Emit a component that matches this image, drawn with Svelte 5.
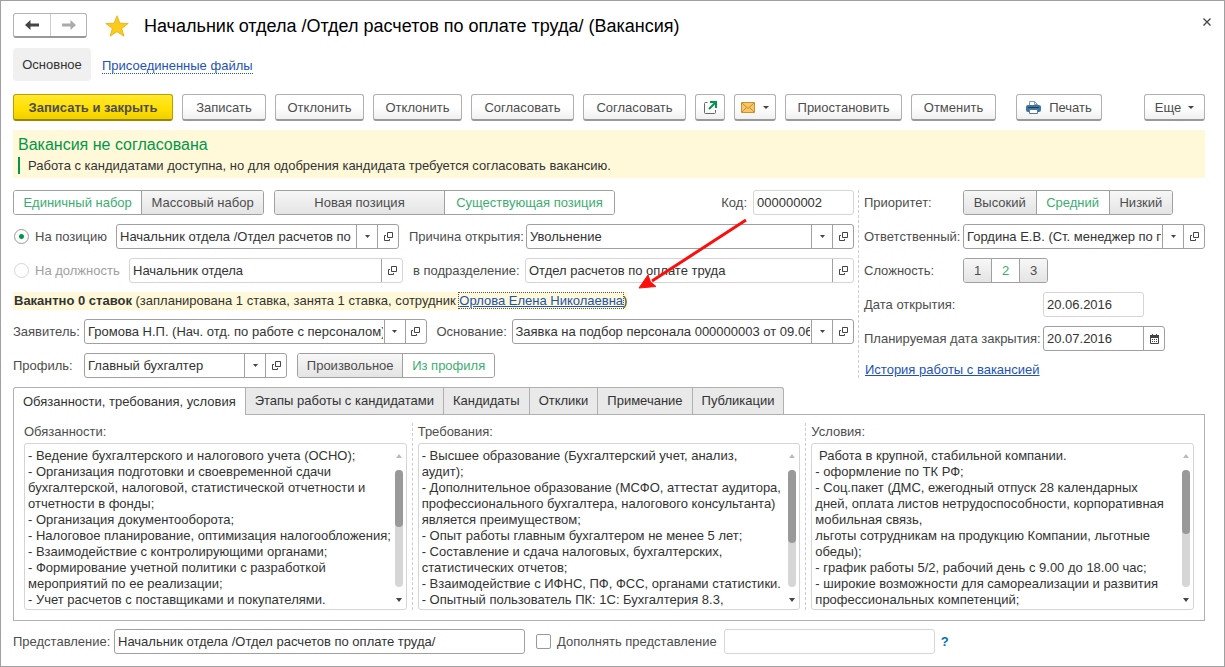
<script>
    let hiring = $state('Единичный набор');
    let position = $state('Существующая позиция');
    let priority = $state('Средний');
    let difficulty = $state('2');
    let source = $state('Из профиля');
    let activeTab = $state('Обязанности, требования, условия');
    let target = $state('position');

    const tabs = [
        'Обязанности, требования, условия',
        'Этапы работы с кандидатами',
        'Кандидаты',
        'Отклики',
        'Примечание',
        'Публикации'
    ];

    const columns = [
        {
            id: 'duties',
            label: 'Обязанности:',
            thumb: 49,
            text: `- Ведение бухгалтерского и налогового учета (ОСНО);
- Организация подготовки и своевременной сдачи
бухгалтерской, налоговой, статистической отчетности и
отчетности в фонды;
- Организация документооборота;
- Налоговое планирование, оптимизация налогообложения;
- Взаимодействие с контролирующими органами;
- Формирование учетной политики с разработкой
мероприятий по ее реализации;
- Учет расчетов с поставщиками и покупателями.`
        },
        {
            id: 'requirements',
            label: 'Требования:',
            thumb: 63,
            text: `- Высшее образование (Бухгалтерский учет, анализ,
аудит);
- Дополнительное образование (МСФО, аттестат аудитора,
профессионального бухгалтера, налогового консультанта)
является преимуществом;
- Опыт работы главным бухгалтером не менее 5 лет;
- Составление и сдача налоговых, бухгалтерских,
статистических отчетов;
- Взаимодействие с ИФНС, ПФ, ФСС, органами статистики.
- Опытный пользователь ПК: 1С: Бухгалтерия 8.3,`
        },
        {
            id: 'conditions',
            label: 'Условия:',
            thumb: 55,
            text: ` Работа в крупной, стабильной компании.
- оформление по ТК РФ;
- Соц.пакет (ДМС, ежегодный отпуск 28 календарных
дней, оплата листов нетрудоспособности, корпоративная
мобильная связь,
льготы сотрудникам на продукцию Компании, льготные
обеды);
- график работы 5/2, рабочий день с 9.00 до 18.00 час;
- широкие возможности для самореализации и развития
профессиональных компетенций;`
        }
    ];
</script>

{#snippet caret()}
    <svg class="caret" width="6" height="3" viewBox="0 0 6 3" aria-hidden="true"><path d="M0 0h6L3 3z" fill="#444" /></svg>
{/snippet}

{#snippet field(id, value, extras = [], locked = false)}
    <div class="field" class:locked>
        <input {id} type="text" {value} readonly={locked} />
        {#if extras.includes('list')}
            <button type="button" aria-label="Выбрать из списка">
                <svg width="5" height="3" viewBox="0 0 5 3"><path d="M0 0h5L2.5 3z" fill="#444" /></svg>
            </button>
        {/if}
        {#if extras.includes('open')}
            <button type="button" aria-label="Открыть">
                <svg width="9" height="9" viewBox="0 0 9 9" fill="none" stroke="#444">
                    <path d="M3.5 .5h5v5h-5z" />
                    <path d="M2 3.5H.5v5h5V7" />
                </svg>
            </button>
        {/if}
        {#if extras.includes('calendar')}
            <button type="button" aria-label="Календарь">
                <svg width="9" height="10" viewBox="0 0 9 10">
                    <path d="M.5 2h8v7.5h-8z" fill="#fff" stroke="#444" />
                    <path d="M0 1h9v3H0zM2 0h1v2H2zM6 0h1v2H6z" fill="#444" />
                    <path d="M2 5h1v1H2zM4 5h1v1H4zM6 5h1v1H6zM2 7h1v1H2zM4 7h1v1H4zM6 7h1v1H6z" fill="#444" />
                </svg>
            </button>
        {/if}
    </div>
{/snippet}

{#snippet segments(items, current, pick, kind)}
    <div class="segments {kind}" role="group">
        {#each items as item}
            <button type="button" class:on={item === current} aria-pressed={item === current} onclick={() => pick(item)}>{item}</button>
        {/each}
    </div>
{/snippet}

<main class="window">
    <header class="title-row">
        <div class="history">
            <button type="button" aria-label="Назад">
                <svg width="14" height="12" viewBox="0 0 14 12"><path d="M0 6l5.500-5v3.500H14v3H5.500V11z" fill="#444" /></svg>
            </button>
            <button type="button" aria-label="Вперед">
                <svg width="14" height="12" viewBox="0 0 14 12"><path d="M14 6L8.500 1v3.500H0v3h8.500V11z" fill="#aaa" /></svg>
            </button>
        </div>
        <svg class="star" width="24" height="22" viewBox="0 0 24 22" aria-hidden="true">
            <path d="M12 .8l2.900 7.400 8.300.3-6.500 5 2.300 7.700-7-4.500-7 4.500 2.300-7.700-6.500-5 8.300-.3z" fill="#fbcb1b" stroke="#e3ad12" stroke-width=".8" />
        </svg>
        <h1>Начальник отдела /Отдел расчетов по оплате труда/ (Вакансия)</h1>
        <button type="button" class="close" aria-label="Закрыть">
            <svg width="8" height="8" viewBox="0 0 8 8"><path d="M.5 .5l7 7M7.500 .5l-7 7" stroke="#444" stroke-width="1.300" /></svg>
        </button>
    </header>

    <nav>
        <span class="current">Основное</span>
        <a href="#files">Присоединенные файлы</a>
    </nav>

    <div class="toolbar">
        <button type="button" class="primary">Записать и закрыть</button>
        <button type="button" class="w-84">Записать</button>
        <button type="button" class="w-89">Отклонить</button>
        <button type="button" class="w-89">Отклонить</button>
        <button type="button" class="w-103">Согласовать</button>
        <button type="button" class="w-103">Согласовать</button>
        <button type="button" class="w-30" aria-label="Открыть в новом окне">
            <svg width="15" height="15" viewBox="0 0 15 15" fill="none">
                <path d="M4.500 2.500H2.500a1 1 0 0 0-1 1v9a1 1 0 0 0 1 1h9a1 1 0 0 0 1-1V10" stroke="#666" />
                <path d="M6 9l6.500-6.500" stroke="#00974a" stroke-width="2" />
                <path d="M7 1h7v7h-2V3H7z" fill="#00974a" />
            </svg>
        </button>
        <button type="button" class="w-42" aria-label="Письмо">
            <svg width="14" height="11" viewBox="0 0 14 11">
                <path d="M.5 .5h13v10H.5z" fill="#f6c768" stroke="#cf8f2c" />
                <path d="M1 1l6 5.500L13 1M1 10l4.500-4.500M13 10L8.500 5.500" fill="none" stroke="#c98a2b" />
            </svg>
            {@render caret()}
        </button>
        <button type="button" class="w-117">Приостановить</button>
        <button type="button" class="w-85">Отменить</button>
        <button type="button" class="w-86 print">
            <svg width="15" height="15" viewBox="0 0 15 15">
                <path d="M3.500 6V1.500h5l3 3V6" fill="#fff" stroke="#8796a8" />
                <path d="M8.500 1.500v3h3" fill="none" stroke="#8796a8" />
                <rect x="0" y="5" width="15" height="7" rx="2" fill="#3f749f" />
                <path d="M2 7.500h11" stroke="#164468" />
                <path d="M3.500 9.500h8v4h-8z" fill="#fff" stroke="#5a7896" />
            </svg>
            Печать
        </button>
        <button type="button" class="w-61 more">Еще {@render caret()}</button>
    </div>

    <section class="banner">
        <h2>Вакансия не согласована</h2>
        <p>Работа с кандидатами доступна, но для одобрения кандидата требуется согласовать вакансию.</p>
    </section>

    <div class="form">
        <div class="left">
            <div class="row">
                {@render segments(['Единичный набор', 'Массовый набор'], hiring, (v) => (hiring = v), 'hiring')}
                {@render segments(['Новая позиция', 'Существующая позиция'], position, (v) => (position = v), 'position')}
                <label class="push" for="code">Код:</label>
                <div class="box-code">{@render field('code', '000000002', [], true)}</div>
            </div>
            <div class="row">
                <label class="radio w-position"><input type="radio" bind:group={target} value="position" />На позицию</label>
                <div class="box-a">{@render field('position', 'Начальник отдела /Отдел расчетов по', ['list', 'open'])}</div>
                <label class="w-reason" for="reason">Причина открытия:</label>
                <div class="box-b">{@render field('reason', 'Увольнение', ['list', 'open'])}</div>
            </div>
            <div class="row">
                <label class="radio w-post off"><input type="radio" bind:group={target} value="post" disabled />На должность</label>
                <div class="box-c">{@render field('post', 'Начальник отдела', ['open'], true)}</div>
                <label class="w-unit" for="unit">в подразделение:</label>
                <div class="box-d">{@render field('unit', 'Отдел расчетов по оплате труда', ['open'], true)}</div>
            </div>
            <p class="vacant"><span><b>Вакантно 0 ставок</b> (запланирована 1 ставка, занята 1 ставка, сотрудник <a href="#employee">Орлова Елена Николаевна</a>)</span></p>
            <div class="row">
                <label class="w-short" for="applicant">Заявитель:</label>
                <div class="box-e">{@render field('applicant', 'Громова Н.П. (Нач. отд. по работе с персоналом)', ['list', 'open'])}</div>
                <label class="w-basis" for="basis">Основание:</label>
                <div class="box-e">{@render field('basis', 'Заявка на подбор персонала 000000003 от 09.06', ['list', 'open'])}</div>
            </div>
            <div class="row">
                <label class="w-short" for="profile">Профиль:</label>
                <div class="box-profile">{@render field('profile', 'Главный бухгалтер', ['list', 'open'])}</div>
                {@render segments(['Произвольное', 'Из профиля'], source, (v) => (source = v), 'source')}
            </div>
            <svg class="pointer" width="110" height="74" viewBox="0 0 110 74" aria-hidden="true">
                <path d="M108 2L14 63" stroke="#fb0f0c" stroke-width="3" />
                <path d="M1 70l9-13 2.500 7 5.500 4.500z" fill="#fb0f0c" stroke="#fb0f0c" />
            </svg>
        </div>

        <div class="right">
            <div class="row">
                <span class="w-right">Приоритет:</span>
                {@render segments(['Высокий', 'Средний', 'Низкий'], priority, (v) => (priority = v), 'priority')}
            </div>
            <div class="row">
                <label class="w-right" for="manager">Ответственный:</label>
                <div class="box-e">{@render field('manager', 'Гордина Е.В. (Ст. менеджер по персоналу)', ['list', 'open'])}</div>
            </div>
            <div class="row">
                <span class="w-right">Сложность:</span>
                {@render segments(['1', '2', '3'], difficulty, (v) => (difficulty = v), 'difficulty')}
            </div>
            <div class="row">
                <label class="w-date" for="opened">Дата открытия:</label>
                <div class="box-code">{@render field('opened', '20.06.2016', [], true)}</div>
            </div>
            <div class="row">
                <label class="w-date" for="closing">Планируемая дата закрытия:</label>
                <div class="box-date">{@render field('closing', '20.07.2016', ['calendar'])}</div>
            </div>
            <a class="story" href="#history">История работы с вакансией</a>
        </div>
    </div>

    <div class="tabs" role="tablist">
        {#each tabs as tab}
            <button type="button" role="tab" class:on={tab === activeTab} aria-selected={tab === activeTab} onclick={() => (activeTab = tab)}>{tab}</button>
        {/each}
    </div>
    <section class="panel">
        {#each columns as column, i}
            {#if i > 0}
                <div class="divider"></div>
            {/if}
            <div class="column">
                <label for={column.id}>{column.label}</label>
                <div class="memo">
                    <textarea id={column.id} value={column.text}></textarea>
                    <div class="scroll" aria-hidden="true">
                        <svg width="6" height="4" viewBox="0 0 6 4"><path d="M0 4h6L3 0z" fill="#bbb" /></svg>
                        <div class="track"><div class="thumb" style="height: {column.thumb}%"></div></div>
                        <svg width="6" height="4" viewBox="0 0 6 4"><path d="M0 0h6L3 4z" fill="#444" /></svg>
                    </div>
                </div>
            </div>
        {/each}
    </section>

    <footer class="row">
        <label class="w-view" for="view">Представление:</label>
        <div class="box-view">{@render field('view', 'Начальник отдела /Отдел расчетов по оплате труда/')}</div>
        <label class="check"><input type="checkbox" />Дополнять представление</label>
        <div class="box-extra">{@render field('extra', '', [], true)}</div>
        <button type="button" class="help">?</button>
    </footer>
</main>

<style>
    .window {
        box-sizing: border-box;
        min-height: 100vh;
        padding: 12px 19px 12px 12px;
        border: 1px solid #a0a0a0;
        background: #fff;
        color: #333;
        font: 13px/16px 'Liberation Sans', Arial, sans-serif;
    }

    .window :global(*) {
        box-sizing: border-box;
    }

    button,
    input,
    textarea {
        margin: 0;
        font: inherit;
        color: inherit;
    }

    button {
        display: flex;
        align-items: center;
        justify-content: center;
        padding: 0;
        border: 0;
        background: none;
        white-space: nowrap;
    }

    h1,
    h2,
    p {
        margin: 0;
        font-weight: normal;
    }

    label,
    .row > span {
        flex: none;
        color: #4d4d4d;
        white-space: nowrap;
    }

    a {
        color: #1d53b5;
    }

    /* title and navigation */
    .title-row {
        display: flex;
        align-items: center;
        height: 25px;
    }

    .history {
        display: flex;
        border: 1px solid #b3b3b3;
        border-bottom: 2px solid #999;
        border-radius: 3px;
    }

    .history button {
        width: 36px;
        height: 22px;
    }

    .history button + button {
        border-left: 1px solid #ccc;
    }

    .star {
        margin: 0 15px 0 18px;
    }

    h1 {
        color: #000;
        font-size: 18px;
        line-height: 24px;
        white-space: nowrap;
    }

    .close {
        width: 16px;
        height: 16px;
        margin: 0 -10px 8px auto;
    }

    nav {
        display: flex;
        align-items: center;
        gap: 11px;
        height: 33px;
        margin-top: 10px;
    }

    .current {
        width: 78px;
        padding: 9px 0 8px;
        border-radius: 4px;
        background: #f0f0f0;
        text-align: center;
    }

    nav a {
        margin-top: 3px;
        border-bottom: 1px dotted #1d53b5;
        line-height: 14px;
        text-decoration: none;
    }

    /* command bar */
    .toolbar {
        display: flex;
        gap: 9px;
        margin-top: 13px;
    }

    .toolbar button {
        height: 27px;
        padding-top: 1px;
        border: 1px solid #b0b0b0;
        border-bottom: 2px solid #999;
        border-radius: 3px;
        background: linear-gradient(#fff 50%, #f0f0f0);
        color: #4d4d4d;
    }

    .toolbar .primary {
        width: 160px;
        border-color: #b5a000 #b5a000 #9a8700;
        background: linear-gradient(#ffe82e, #ffdf00 60%, #f0d000);
        font-weight: bold;
    }

    .w-30 { width: 30px; }
    .w-42 { width: 42px; gap: 8px; }
    .w-61 { width: 61px; gap: 7px; }
    .w-84 { width: 84px; }
    .w-85 { width: 85px; }
    .w-86 { width: 86px; gap: 8px; }
    .w-89 { width: 89px; }
    .w-103 { width: 103px; }
    .w-117 { width: 117px; }

    .print {
        margin-left: 11px;
    }

    .more {
        margin-left: auto;
    }

    .banner {
        height: 48px;
        margin-top: 9px;
        padding: 5px;
        background: #fff9d9;
    }

    h2 {
        color: #00974a;
        font-size: 16px;
        line-height: 20px;
    }

    .banner p {
        margin-top: 2px;
        padding-top: 1px;
        padding-left: 8px;
        border-left: 2px solid #00974a;
    }

    /* fields */
    .form {
        display: grid;
        grid-template-columns: minmax(0, 841fr) minmax(0, 347fr);
        gap: 4px;
        margin-top: 12px;
    }

    .left {
        position: relative;
    }

    .right {
        padding-left: 5px;
        border-left: 1px dashed #ccc;
    }

    .row {
        display: flex;
        align-items: center;
        height: 25px;
    }

    .row + .row {
        margin-top: 9px;
    }

    .field {
        display: flex;
        height: 25px;
        border: 1px solid #a0a0a0;
        border-radius: 3px;
        background: #fff;
        overflow: hidden;
    }

    .field.locked {
        border-color: #d5d5d5;
    }

    .field input {
        flex: 1;
        min-width: 0;
        padding: 0 1px 0 3px;
        border: 0;
        outline: 0;
        background: none;
    }

    .field button {
        flex: none;
        width: 21px;
        border-left: 1px solid #a0a0a0;
    }

    .segments {
        display: flex;
        height: 25px;
        border: 1px solid #a0a0a0;
        border-radius: 3px;
        overflow: hidden;
    }

    .segments button {
        flex: 1 1 auto;
        background: linear-gradient(#f7f7f7, #e4e4e4);
        color: #4d4d4d;
    }

    .segments button + button {
        border-left: 1px solid #a0a0a0;
    }

    .segments .on {
        background: #fff;
        color: #3cad70;
    }

    .hiring { width: 251px; }
    .position { width: 341px; margin-left: 10px; }
    .source { width: 198px; margin-left: 10px; }
    .priority { width: 210px; }
    .difficulty { width: 85px; }

    .position button {
        flex: 1 1 0;
    }

    .push {
        margin-left: auto;
        margin-right: 6px;
    }

    .box-a { flex: 283 1 0; min-width: 0; }
    .box-b { flex: 328 1 0; min-width: 0; }
    .box-c { flex: 274 1 0; min-width: 0; }
    .box-d { flex: 329 1 0; min-width: 0; }
    .box-e { flex: 1 1 0; min-width: 0; }
    .box-code { width: 101px; }
    .box-date { width: 122px; }
    .box-profile { width: 203px; }
    .box-view { width: 411px; }
    .box-extra { width: 211px; }

    .w-position { width: 103px; }
    .w-post { width: 116px; }
    .w-reason { width: 127px; padding-left: 10px; }
    .w-unit { width: 122px; padding-left: 10px; }
    .w-short { width: 71px; }
    .w-basis { width: 85px; padding-left: 10px; }
    .w-right { width: 99px; }
    .w-date { width: 179px; }
    .w-view { width: 101px; }

    .radio,
    .check {
        display: flex;
        align-items: center;
    }

    .radio input {
        appearance: none;
        width: 15px;
        height: 15px;
        margin: 0 6px 0 1px;
        border: 1px solid #999;
        border-radius: 50%;
    }

    .radio input:checked {
        background: radial-gradient(circle, #00974a 2px, #fff 3px);
    }

    .off {
        color: #a0a0a0;
    }

    .off input {
        border-color: #d5d5d5;
    }

    .vacant {
        height: 18px;
        margin: 9px 0;
        line-height: 18px;
        white-space: nowrap;
    }

    .vacant span {
        display: inline-block;
        padding: 0 1px;
        background: #fff9d9;
    }

    .vacant a {
        outline: 1px dotted #555;
    }

    .pointer {
        position: absolute;
        top: 28px;
        right: 106px;
        pointer-events: none;
    }

    .story {
        display: inline-block;
        margin: 11px 0 0 1px;
    }

    /* tabs */
    .tabs {
        display: flex;
        margin-top: 9px;
    }

    .tabs button {
        height: 27px;
        padding: 0 9px;
        border: 1px solid #b0b0b0;
        border-left: 0;
        border-bottom: 0;
        background: #e9e9e9;
    }

    .tabs button:first-child {
        border-left: 1px solid #b0b0b0;
        border-top-left-radius: 3px;
    }

    .tabs button:last-child {
        border-top-right-radius: 3px;
    }

    .tabs .on {
        height: 28px;
        margin-bottom: -1px;
        background: #fff;
    }

    .panel {
        display: flex;
        gap: 5px;
        padding: 8px 10px 10px;
        border: 1px solid #b0b0b0;
    }

    .divider {
        border-left: 1px dashed #ccc;
    }

    .column {
        flex: 1 1 0;
        min-width: 0;
    }

    .column label {
        display: block;
        height: 20px;
        line-height: 18px;
    }

    .memo {
        display: flex;
        height: 167px;
        padding: 4px 3px 1px;
        border: 1px solid #d5d5d5;
        border-radius: 3px;
    }

    textarea {
        flex: 1;
        min-width: 0;
        padding: 0;
        border: 0;
        outline: 0;
        resize: none;
        overflow: hidden;
        white-space: pre;
    }

    .scroll {
        display: flex;
        flex-direction: column;
        align-items: center;
        justify-content: space-between;
        width: 8px;
        padding: 6px 0;
    }

    .track {
        width: 8px;
        height: 117px;
        border-radius: 4px;
        background: #d6d6d6;
    }

    .thumb {
        border-radius: 4px;
        background: #999;
    }

    footer {
        margin-top: 8px;
    }

    .check {
        margin-left: 11px;
        margin-right: 7px;
    }

    .check input {
        appearance: none;
        width: 15px;
        height: 15px;
        margin-right: 6px;
        border: 1px solid #999;
        border-radius: 2px;
    }

    .help {
        margin-left: 6px;
        color: #0070ba;
        font-weight: bold;
    }
</style>
